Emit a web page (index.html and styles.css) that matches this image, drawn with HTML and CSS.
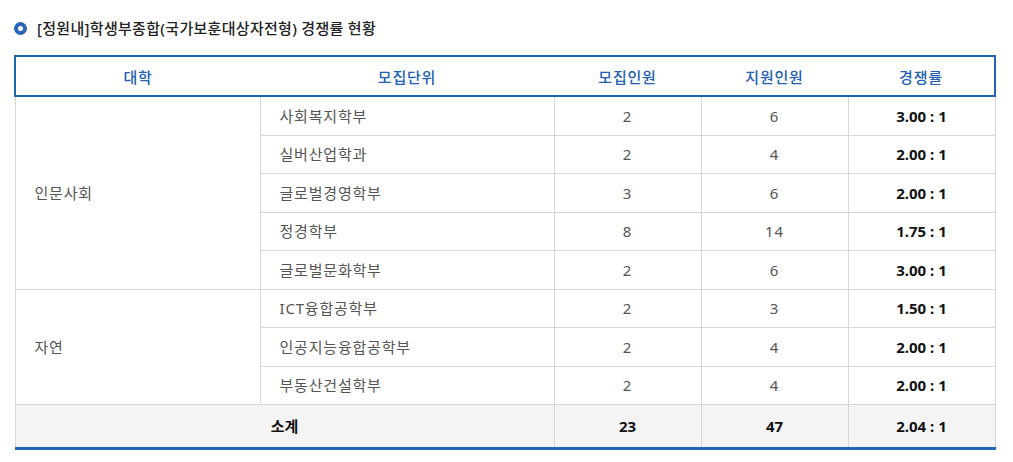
FILE: index.html
```html
<!DOCTYPE html>
<html lang="ko">
<head>
<meta charset="utf-8">
<link rel="stylesheet" href="styles.css">
</head>
<body>
<div class="wrap">
  <h3 class="title"><span class="bullet"></span>[정원내]학생부종합(국가보훈대상자전형) 경쟁률 현황</h3>
  <table class="rate">
    <colgroup>
      <col class="c1"><col class="c2"><col class="c3"><col class="c4"><col class="c5">
    </colgroup>
    <thead>
      <tr><th>대학</th><th>모집단위</th><th>모집인원</th><th>지원인원</th><th>경쟁률</th></tr>
    </thead>
    <tbody>
      <tr><td class="col" rowspan="5">인문사회</td><td class="unit">사회복지학부</td><td>2</td><td>6</td><td class="r">3.00 : 1</td></tr>
      <tr><td class="unit">실버산업학과</td><td>2</td><td>4</td><td class="r">2.00 : 1</td></tr>
      <tr><td class="unit">글로벌경영학부</td><td>3</td><td>6</td><td class="r">2.00 : 1</td></tr>
      <tr><td class="unit">정경학부</td><td>8</td><td>14</td><td class="r">1.75 : 1</td></tr>
      <tr><td class="unit">글로벌문화학부</td><td>2</td><td>6</td><td class="r">3.00 : 1</td></tr>
      <tr><td class="col" rowspan="3">자연</td><td class="unit">ICT융합공학부</td><td>2</td><td>3</td><td class="r">1.50 : 1</td></tr>
      <tr><td class="unit">인공지능융합공학부</td><td>2</td><td>4</td><td class="r">2.00 : 1</td></tr>
      <tr><td class="unit">부동산건설학부</td><td>2</td><td>4</td><td class="r">2.00 : 1</td></tr>
      <tr class="sum"><td colspan="2">소계</td><td>23</td><td>47</td><td>2.04 : 1</td></tr>
    </tbody>
  </table>
</div>
</body>
</html>
```
FILE: styles.css
```css
html, body {
  margin: 0;
  padding: 0;
  background: #fff;
}
body {
  font-family: "Noto Sans", "Noto Sans CJK KR", sans-serif;
  color: #555;
}
.wrap {
  padding: 17px 18px 0 14px;
}
.title {
  display: flex;
  align-items: center;
  margin: 0 0 16px 0;
  font-size: 15px;
  font-weight: 500;
  line-height: 22px;
  color: #222;
  letter-spacing: 0.3px;
}
.bullet {
  width: 5px;
  height: 5px;
  border: 4px solid #2a67b8;
  border-radius: 50%;
  margin: 0 10px 0 0;
  flex: none;
}
.rate {
  width: 980px;
  border-collapse: collapse;
  table-layout: fixed;
  font-size: 15px;
  letter-spacing: 0.8px;
}
.c1 { width: 245px; }
.c2 { width: 294px; }
.c3 { width: 147px; }
.c4 { width: 147px; }
.c5 { width: 147px; }
.rate th {
  height: 38px;
  padding: 0;
  font-weight: 500;
  color: #2160b2;
  border-top: 2px solid #2265b5;
  border-bottom: 2px solid #2265b5;
  text-align: center;
}
.rate th:first-child { border-left: 2px solid #2265b5; }
.rate th:last-child { border-right: 2px solid #2265b5; }
.rate td {
  height: 37.5px;
  padding: 0;
  border: 1px solid #d6d6d6;
  text-align: center;
  line-height: 20px;
}
.rate td.col,
.rate td.unit {
  text-align: left;
  padding-left: 19px;
}
.rate td.r {
  font-weight: 700;
  color: #111;
  letter-spacing: 0;
}
.rate tr.sum td {
  height: 42px;
  background: #f4f4f4;
  font-weight: 700;
  color: #111;
  letter-spacing: 0;
  border-bottom: 3px solid #2265b5;
}
```
